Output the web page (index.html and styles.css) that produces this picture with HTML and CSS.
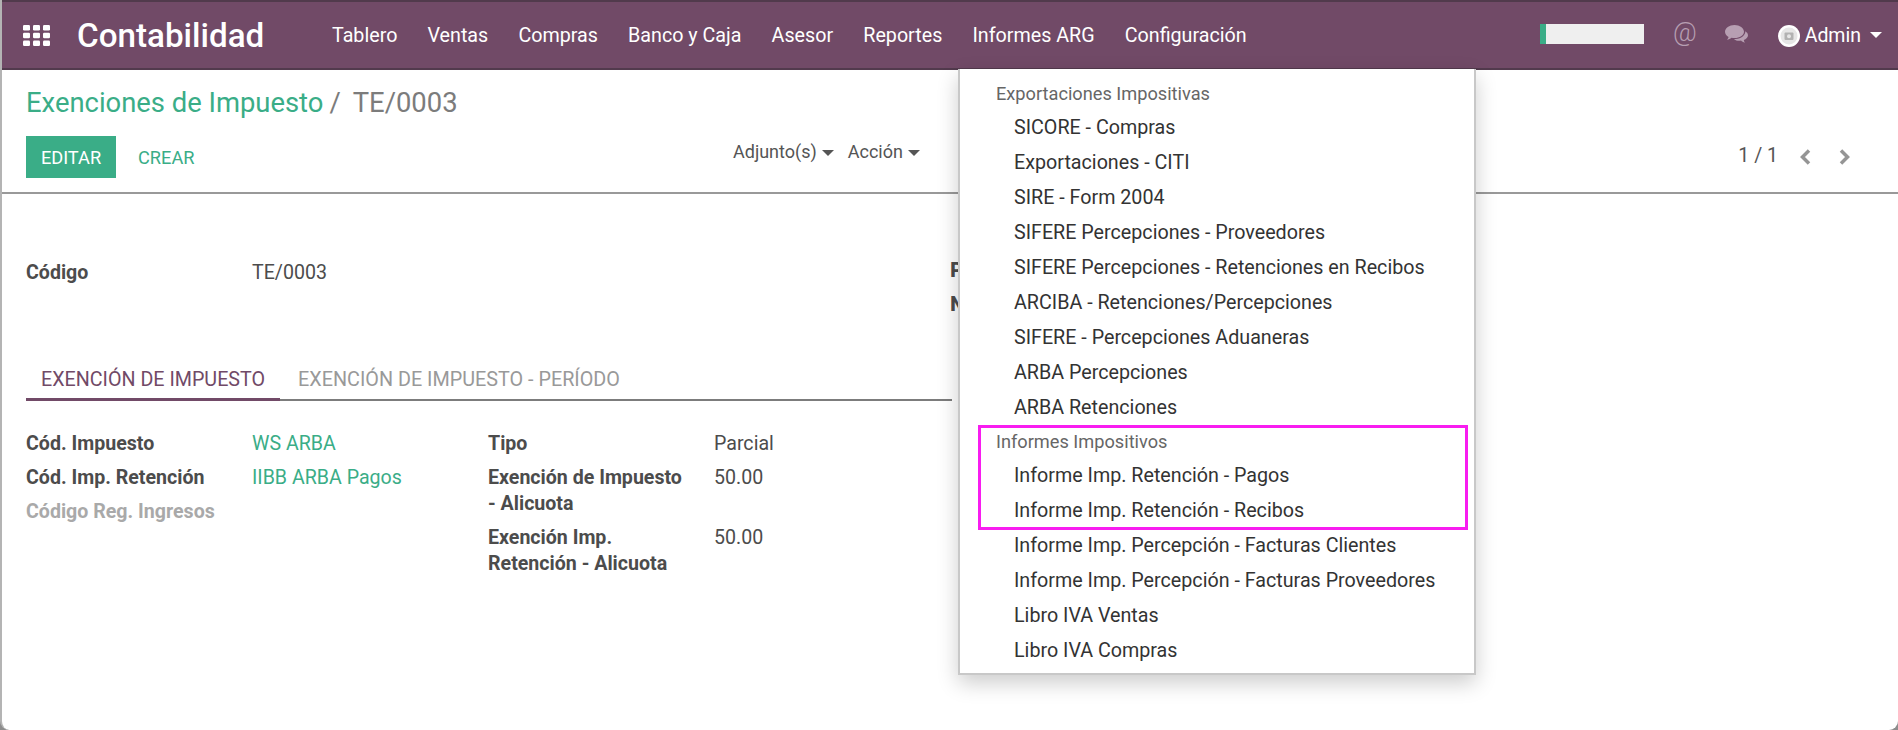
FILE: index.html
```html
<!DOCTYPE html>
<html lang="es">
<head>
<meta charset="utf-8">
<title>Contabilidad</title>
<link rel="stylesheet" href="styles.css">
</head>
<body>
<div class="app">
  <header class="navbar">
    <svg class="apps" viewBox="0 0 27 21" aria-hidden="true">
      <g fill="#fff">
        <rect x="0" y="0" width="7" height="5.4" rx="1.2"/><rect x="10" y="0" width="7" height="5.4" rx="1.2"/><rect x="20" y="0" width="7" height="5.4" rx="1.2"/>
        <rect x="0" y="7.8" width="7" height="5.4" rx="1.2"/><rect x="10" y="7.8" width="7" height="5.4" rx="1.2"/><rect x="20" y="7.8" width="7" height="5.4" rx="1.2"/>
        <rect x="0" y="15.6" width="7" height="5.4" rx="1.2"/><rect x="10" y="15.6" width="7" height="5.4" rx="1.2"/><rect x="20" y="15.6" width="7" height="5.4" rx="1.2"/>
      </g>
    </svg>
    <div class="brand">Contabilidad</div>
    <nav class="mainnav">
      <a>Tablero</a><a>Ventas</a><a>Compras</a><a>Banco y Caja</a><a>Asesor</a><a>Reportes</a><a>Informes ARG</a><a>Configuración</a>
    </nav>
    <div class="systray">
      <div class="progress"><span class="progress-fill"></span></div>
      <span class="at">@</span>
      <svg class="chat" viewBox="0 0 24 19" aria-hidden="true">
        <path fill="#b79fb2" d="M9.5 0C4.3 0 0 3 0 6.8c0 2.2 1.4 4 3.6 5.2-.3 1-.9 1.9-1.6 2.7 1.7-.2 3.3-.9 4.5-1.9 1 .2 2 .3 3 .3 5.2 0 9.5-3 9.5-6.3C19 3 14.700 0 9.500 0z"/>
        <path fill="#b79fb2" d="M20.300 6.200c.2 3.900-4 7.400-9.600 7.700-.8 0-1.300 0-1.800 0 1.300 1.200 3.200 1.900 5.300 1.900.6 0 1.200 0 1.800-.2 .9.900 2.300 1.700 3.800 2.100-.5-.8-.9-1.700-1-2.600 2.400-.9 4.200-2.700 4.200-4.800 0-1.600-1-3-2.700-4.100z"/>
      </svg>
      <div class="user">
        <svg class="avatar" viewBox="0 0 22 22" aria-hidden="true">
          <circle cx="11" cy="11" r="11" fill="#fff"/>
          <circle cx="11" cy="11" r="8.500" fill="#e6e6e6"/>
          <rect x="6.500" y="7.500" width="9" height="7.500" rx="1" fill="#b2b2b2"/>
          <circle cx="11" cy="11.300" r="2" fill="#e6e6e6"/>
        </svg>
        <span class="user-name">Admin</span>
        <span class="caret caret-white"></span>
      </div>
    </div>
  </header>

  <section class="control">
    <h1 class="crumbs"><a>Exenciones de Impuesto</a><span class="sep">/</span><span class="current">TE/0003</span></h1>
    <div class="actions">
      <div class="buttons">
        <button class="btn-edit">EDITAR</button>
        <button class="btn-create">CREAR</button>
      </div>
      <div class="sidebar-menus">
        <span class="drop">Adjunto(s)<span class="caret"></span></span>
        <span class="drop">Acción<span class="caret"></span></span>
      </div>
      <div class="pager">
        <span class="pager-value">1 / 1</span>
        <svg class="chev" viewBox="0 0 12 18" aria-hidden="true"><path d="M10 2.500 3.500 9l6.500 6.500" fill="none" stroke="#959595" stroke-width="3.500"/></svg>
        <svg class="chev" viewBox="0 0 12 18" aria-hidden="true"><path d="m2 2.500 6.500 6.500L2 15.500" fill="none" stroke="#959595" stroke-width="3.500"/></svg>
      </div>
    </div>
  </section>

  <main class="sheet">
    <div class="top-group">
      <div class="pair"><span class="label">Código</span><span class="value">TE/0003</span></div>
      <div class="peek"><b>P</b><b>N</b></div>
    </div>
    <div class="tabs">
      <a class="tab tab-active">EXENCIÓN DE IMPUESTO</a>
      <a class="tab tab-second">EXENCIÓN DE IMPUESTO - PERÍODO</a>
    </div>
    <div class="columns">
      <div class="col">
        <div class="pair"><span class="label">Cód. Impuesto</span><span class="value link">WS ARBA</span></div>
        <div class="pair"><span class="label">Cód. Imp. Retención</span><span class="value link">IIBB ARBA Pagos</span></div>
        <div class="pair"><span class="label muted">Código Reg. Ingresos</span></div>
      </div>
      <div class="col">
        <div class="pair"><span class="label">Tipo</span><span class="value">Parcial</span></div>
        <div class="pair"><span class="label">Exención de Impuesto - Alicuota</span><span class="value">50.00</span></div>
        <div class="pair"><span class="label">Exención Imp. Retención - Alicuota</span><span class="value">50.00</span></div>
      </div>
    </div>
  </main>

  <div class="menu">
    <div class="menu-head">Exportaciones Impositivas</div>
    <a class="menu-item">SICORE - Compras</a>
    <a class="menu-item">Exportaciones - CITI</a>
    <a class="menu-item">SIRE - Form 2004</a>
    <a class="menu-item">SIFERE Percepciones - Proveedores</a>
    <a class="menu-item">SIFERE Percepciones - Retenciones en Recibos</a>
    <a class="menu-item">ARCIBA - Retenciones/Percepciones</a>
    <a class="menu-item">SIFERE - Percepciones Aduaneras</a>
    <a class="menu-item">ARBA Percepciones</a>
    <a class="menu-item">ARBA Retenciones</a>
    <div class="menu-head">Informes Impositivos</div>
    <a class="menu-item">Informe Imp. Retención - Pagos</a>
    <a class="menu-item">Informe Imp. Retención - Recibos</a>
    <a class="menu-item">Informe Imp. Percepción - Facturas Clientes</a>
    <a class="menu-item">Informe Imp. Percepción - Facturas Proveedores</a>
    <a class="menu-item">Libro IVA Ventas</a>
    <a class="menu-item">Libro IVA Compras</a>
  </div>
  <div class="highlight"></div>
</div>
</body>
</html>
```

FILE: styles.css
```css
* { box-sizing: border-box; }
html, body { margin: 0; height: 730px; overflow: hidden; background: #fff; }
body { font-family: Roboto, "Liberation Sans", sans-serif; color: #4c4c4c; font-size: 19.600px; background: #8d8d8d; }

.app {
  position: relative;
  width: 1898px;
  height: 730px;
  background: #fff;
  border-radius: 0 0 9px 9px;
  border-left: 2px solid #b4b4b4;
  overflow: hidden;
  display: flex;
  flex-direction: column;
}

.navbar {
  height: 70px;
  margin-left: -2px;
  background: #714a67;
  border-top: 2px solid #513a4c;
  border-bottom: 2px solid #523a4d;
  border-left: 2px solid #4e3a4b;
  display: flex;
  align-items: center;
  padding-left: 21px;
  color: #fff;
  flex: none;
}
.apps { width: 27px; height: 21px; flex: none; }
.brand { font-size: 33.200px; font-weight: 500; margin-left: 27px; width: 255px; }
.mainnav { display: flex; gap: 30.150px; font-size: 19.700px; }
.systray { margin-left: auto; display: flex; align-items: center; }
.progress { width: 104px; height: 20px; background: #efefef; margin-top: -2px; }
.progress-fill { display: block; width: 6px; height: 20px; background: #3aad87; }
.at { font-size: 26px; font-weight: 300; color: #b79fb2; margin-left: 29px; margin-top: -7px; line-height: 1; }
.chat { width: 24px; height: 19px; margin-left: 28px; margin-top: -2px; }
.user { display: flex; align-items: center; margin-left: 29px; margin-right: 16px; }
.avatar { width: 22px; height: 22px; margin-top: 2px; }
.user-name { font-size: 19.500px; margin-left: 5px; }
.caret { display: inline-block; width: 0; height: 0; border-left: 6px solid transparent; border-right: 6px solid transparent; border-top: 6px solid #555; margin-left: 5px; vertical-align: 2px; }
.caret-white { border-top-color: #fff; margin-left: 9px; }

.control {
  flex: none;
  height: 124px;
  border-bottom: 2px solid #999;
  padding: 14px 21px 0 24px;
}
.crumbs { margin: 0; font-size: 27.400px; font-weight: 400; line-height: 38px; color: #7c7c7c; white-space: nowrap; }
.crumbs a { color: #3aad87; }
.sep { margin: 0 7px 0 6px; }
.current { margin-left: 5px; }
.actions { display: flex; align-items: center; margin-top: 14px; height: 42px; }
.buttons { display: flex; align-items: center; width: 707px; }
button { font-family: inherit; border: 0; font-size: 18.200px; padding: 0; }
.btn-edit { width: 90px; height: 42px; background: #3aad87; color: #fff; }
.btn-create { background: none; color: #3aad87; margin-left: 22px; }
.sidebar-menus { display: flex; gap: 14px; font-size: 18px; margin-top: -11px; color: #555; }
.pager { margin-left: auto; display: flex; align-items: center; color: #555; font-size: 19.500px; margin-right: 1px; }
.pager-value { margin-right: 21px; margin-top: -4px; }
.chev { width: 12px; height: 18px; margin-right: 28px; }
.chev:last-child { margin-right: 25px; }

.sheet { flex: 1; padding: 0 0 0 24px; }
.top-group { display: flex; margin-top: 66px; height: 68px; width: 938px; }
.top-group .pair { flex: 1; }
.peek { display: flex; flex-direction: column; font-weight: 700; gap: 13px; line-height: 21px; }
.pair { display: flex; line-height: 26px; padding-bottom: 8px; }
.label { width: 226px; font-weight: 700; flex: none; padding-right: 24px; }
.value { flex: 1; }
.muted { color: #a9a9a9; }
.link { color: #3aad87; }

.tabs { display: flex; width: 926px; border-bottom: 2px solid #7c7c7c; margin-top: 29px; height: 44px; font-size: 19.700px; }
.tab { padding: 0 15px; line-height: 46px; color: #999; height: 44px; }
.tab-active { color: #714a67; border-bottom: 3px solid #714a67; }
.tab-second { margin-left: 3px; font-size: 19.800px; }

.columns { display: flex; margin-top: 30px; }
.col { width: 462px; }
.col + .col { width: 460px; }

.menu {
  position: absolute;
  left: 956px;
  top: 69px;
  width: 518px;
  height: 606px;
  background: #fff;
  border: 2px solid #c8c8c8;
  border-top: 0;
  box-shadow: 0 8px 20px rgba(0, 0, 0, .2);
  padding: 8px 0 7px;
  font-size: 19.700px;
}
.menu-head { height: 33px; line-height: 33px; padding-left: 36px; color: #666; font-size: 18.200px; }
.menu-item { display: block; height: 35px; line-height: 36px; padding-left: 54px; color: #333; }

.highlight {
  position: absolute;
  left: 976px;
  top: 425px;
  width: 490px;
  height: 105px;
  border: 3px solid #f81cf0;
}
```
